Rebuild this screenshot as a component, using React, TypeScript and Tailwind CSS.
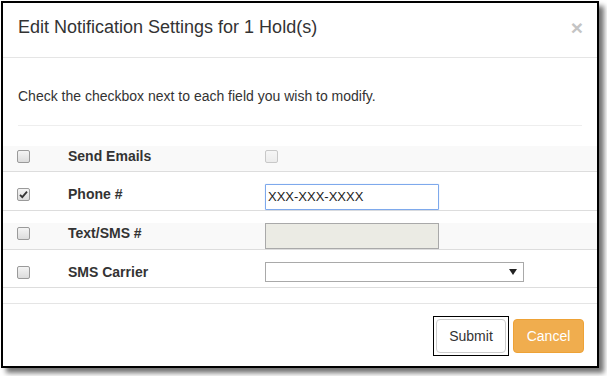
import React from "react";

function Box({ checked = false, disabled = false }: { checked?: boolean; disabled?: boolean }) {
  return (
    <span
      className={
        "relative block w-[13px] h-[13px] rounded-[2px] border " +
        (disabled
          ? "border-[#c8c8c8] bg-gradient-to-b from-[#f6f6f6] to-[#ececec]"
          : "border-[#9a9a9a] bg-gradient-to-b from-[#f4f4f4] to-[#dcdcdc]")
      }
    >
      {checked && (
        <svg viewBox="0 0 13 13" className="absolute left-[-1px] top-[-1px] w-[13px] h-[13px]">
          <path d="M3 6.8 L5.3 9.2 L10 3.6" fill="none" stroke="#333" strokeWidth="1.8" />
        </svg>
      )}
    </span>
  );
}

function Row({
  striped,
  checked,
  label,
  children,
  h,
}: {
  striped?: boolean;
  checked?: boolean;
  label: string;
  children: React.ReactNode;
  h: string;
}) {
  return (
    <div className="border-b border-[#dddddd]">
      <div className={"flex " + h + (striped ? " bg-[#f9f9f9]" : "")}>
        <div className="w-[65px] pl-[14px] pt-[4px]">
          <Box checked={checked} />
        </div>
        <div className="w-[197px] text-[14px] leading-[20px] font-bold text-[#333]">{label}</div>
        <div className="flex-1">{children}</div>
      </div>
    </div>
  );
}

export default function App() {
  return (
    <div
      className="w-[607px] h-[376px] bg-white pl-[1px] pt-[1px] overflow-hidden"
      style={{ fontFamily: '"Liberation Sans", Arial, sans-serif' }}
    >
      <div className="w-[598px] h-[367px] border-2 border-black bg-white shadow-[5px_5px_5px_rgba(0,0,0,0.55)] flex flex-col">
        {/* header */}
        <div className="flex justify-between items-start px-[15px] pt-[11px] pb-[17px] border-b border-[#e5e5e5]">
          <div className="text-[18px] leading-[26px] text-[#333]">Edit Notification Settings for 1 Hold(s)</div>
          <div className="text-[21px] leading-[21px] font-bold text-[#c4c4c4] mt-[3px] mr-[-1px]">×</div>
        </div>
        {/* body */}
        <div className="flex flex-col px-[15px] pt-[28px] pb-[15px]">
          <div className="text-[14px] leading-[20px] text-[#333]">
            Check the checkbox next to each field you wish to modify.
          </div>
          <div className="mt-[19px] mb-[8px] h-px bg-[#eeeeee]" />
          <div className="mx-[-15px] flex flex-col gap-[12px] pt-[12px]">
            <Row striped label="Send Emails" h="h-[25px]">
              <div className="pt-[4px]">
                <Box disabled />
              </div>
            </Row>
            <Row checked label="Phone #" h="h-[26px]">
              <div className="w-[174px] h-[26px] border border-[#7ea9ec] rounded-[1px] shadow-[0_0_1px_#9ec2f5] bg-white text-[13px] leading-[24px] pl-[2px] text-[#222]">
                XXX-XXX-XXXX
              </div>
            </Row>
            <Row striped label="Text/SMS #" h="h-[26px]">
              <div className="w-[174px] h-[26px] border border-[#a9a9a9] bg-[#ebebe4]" />
            </Row>
            <Row label="SMS Carrier" h="h-[25px]">
              <div className="w-[259px] h-[20px] border border-[#a9a9a9] bg-white flex items-center justify-end pr-[3px]">
                <svg viewBox="0 0 8 6" className="w-[8px] h-[6px] mr-[3px]">
                  <path d="M0 0 H8 L4 6 Z" fill="#222" />
                </svg>
              </div>
            </Row>
          </div>
        </div>
        {/* footer */}
        <div className="border-t border-[#e5e5e5] flex justify-end items-center gap-[4px] pt-[15px] pr-[13px]">
          <div className="my-[-3px] border border-black p-[2px]">
            <button className="block w-[70px] h-[34px] rounded-[4px] border border-[#cccccc] bg-white text-[14px] text-[#333]">
              Submit
            </button>
          </div>
          <button className="w-[71px] h-[34px] rounded-[4px] border border-[#eea236] bg-[#f0ad4e] text-[14px] text-white">
            Cancel
          </button>
        </div>
      </div>
    </div>
  );
}
